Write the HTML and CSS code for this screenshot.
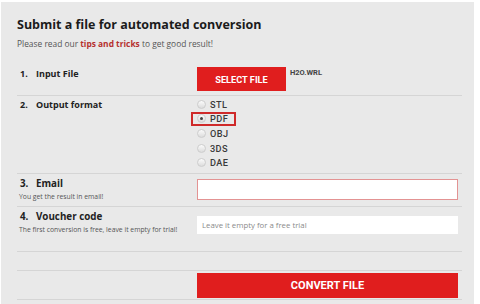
FILE: index.html
```html
<!DOCTYPE html>
<html lang="en">
<head>
  <meta charset="UTF-8" />
  <meta name="viewport" content="width=device-width, initial-scale=1.0" />
  <title>Submit a file</title>
  <link rel="stylesheet" href="styles.css">
</head>
<body>

  <div class="panel">
    <h1>Submit a file for automated conversion</h1>
    <p class="intro">Please read our <a href="#">tips and tricks</a> to get good result!</p>

    <!-- 1. input file -->
    <div class="row row-file">
      <div class="label"><h3><span class="num">1.</span>Input File</h3></div>
      <div class="field">
        <button class="btn btn-select">SELECT FILE</button>
        <span class="filename">H2O.WRL</span>
      </div>
    </div>

    <!-- 2. output format -->
    <div class="row row-format">
      <div class="label"><h3><span class="num">2.</span>Output format</h3></div>
      <div class="field radios">
        <label class="radio"><span class="dot"></span>STL</label>
        <label class="radio checked"><span class="dot"></span>PDF</label>
        <label class="radio"><span class="dot"></span>OBJ</label>
        <label class="radio"><span class="dot"></span>3DS</label>
        <label class="radio"><span class="dot"></span>DAE</label>
      </div>
    </div>

    <!-- 3. email -->
    <div class="row row-email">
      <div class="label">
        <h3 class="big"><span class="num">3.</span>Email</h3>
        <small>You get the result in email!</small>
      </div>
      <div class="field">
        <input type="email" class="text-input invalid" />
      </div>
    </div>

    <!-- 4. voucher -->
    <div class="row row-voucher">
      <div class="label">
        <h3 class="big"><span class="num">4.</span>Voucher code</h3>
        <small>The first conversion is free, leave it empty for trial!</small>
      </div>
      <div class="field">
        <input type="text" class="text-input" placeholder="Leave it empty for a free trial" />
      </div>
    </div>

    <div class="row row-empty"></div>

    <div class="row row-submit">
      <div class="label"></div>
      <div class="field">
        <button class="btn btn-convert">CONVERT FILE</button>
      </div>
    </div>
  </div>

</body>
</html>
```

FILE: styles.css
```css
* {
  box-sizing: border-box;
  margin: 0;
  padding: 0;
}

body {
  background: #fff;
  font-family: 'Open Sans', sans-serif;
  color: #222;
}

.panel {
  background: #e9e9e9;
  margin: 2px 6px 0 1px;
  height: 302px;
  padding: 15px 12px 0 16px;
}

h1 {
  font-size: 12.5px;
  font-weight: 700;
  color: #1b1b1b;
  line-height: 16px;
}

.intro {
  margin-top: 5px;
  font-size: 8.4px;
  line-height: 12px;
  color: #555;
}

.intro a {
  color: #b5302e;
  font-weight: 700;
  text-decoration: none;
}

.row {
  display: flex;
  border-bottom: 1px solid #d5d5d5;
}

.label {
  width: 180px;
  padding-left: 3px;
}

.label h3 {
  font-size: 9px;
  font-weight: 700;
  line-height: 14px;
  color: #222;
}

.label h3.big {
  font-size: 9.8px;
}

.num {
  display: inline-block;
  width: 16px;
}

.label small {
  display: block;
  font-size: 6.8px;
  line-height: 9px;
  color: #555;
  margin-top: 1px;
  margin-left: -1px;
}

.field {
  flex: 1;
}

.btn,
.filename,
.radio {
  font-family: 'Roboto', 'Liberation Sans', sans-serif;
  font-weight: 700;
}

.btn {
  border: none;
  background: #e01e1e;
  color: #fff;
  cursor: pointer;
}

.row-file {
  margin-top: 13px;
  height: 33px;
  padding-top: 4px;
}

.row-file .field {
  display: flex;
  align-items: flex-start;
}

.btn-select {
  width: 89px;
  height: 24px;
  font-size: 9.2px;
  padding-top: 1px;
}

.filename {
  margin-left: 4px;
  margin-top: 1px;
  font-size: 7.5px;
  color: #444;
}

.row-format {
  height: 78px;
  padding-top: 1px;
}

.row-format .label {
  padding-top: 1px;
}

.radios {
  display: flex;
  flex-direction: column;
}

.radio {
  display: flex;
  align-items: center;
  height: 14.6px;
  width: 39px;
  font-size: 9.2px;
  font-weight: 500;
  color: #3a3a3a;
  letter-spacing: 0.4px;
}

.radio.checked {
  outline: 2px solid #cf2a2a;
  outline-offset: -2px;
  margin-left: -6px;
  padding-left: 6px;
  width: 45px;
}

.dot {
  width: 9px;
  height: 9px;
  border-radius: 50%;
  border: 1px solid #cdcdcd;
  background: linear-gradient(#fbfbfb, #dcdcdc);
  margin-right: 4px;
  position: relative;
}

.radio.checked .dot::after {
  content: '';
  position: absolute;
  left: 2px;
  top: 2px;
  width: 3px;
  height: 3px;
  border-radius: 50%;
  background: #444;
}

.row-email {
  height: 33px;
}

.row-email .label {
  padding-top: 3px;
}

.text-input {
  width: 261px;
  border: none;
  background: #fff;
  font-family: 'Open Sans', sans-serif;
  font-size: 7.8px;
  padding: 0 5px;
  outline: none;
}

.text-input.invalid {
  height: 21px;
  margin-top: 5px;
  border: 1px solid #e39393;
}

.text-input::placeholder {
  color: #8a8a8a;
}

.row-voucher {
  height: 45px;
}

.row-voucher .label {
  padding-top: 3px;
}

.row-voucher .text-input {
  height: 18px;
  margin-top: 9px;
}

.row-empty {
  height: 19px;
}

.row-submit {
  height: 29px;
  padding-top: 1px;
}

.btn-convert {
  width: 261px;
  height: 25px;
  font-size: 11px;
}
```
